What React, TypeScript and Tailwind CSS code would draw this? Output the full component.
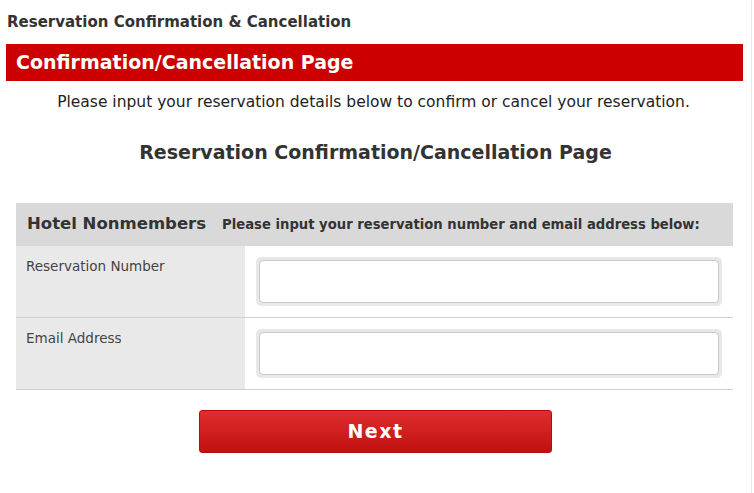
import React from "react";

export default function App() {
  return (
    <div
      className="w-[754px] h-[493px] bg-white relative overflow-hidden text-[#333]"
      style={{ fontFamily: '"DejaVu Sans", "Noto Sans", sans-serif' }}
    >
      <div className="absolute right-[2px] top-0 bottom-0 w-px bg-[#ececec]" />
      <div className="pl-[7px] pt-[11px] h-[44px] text-[15px] font-bold leading-[22px] text-[#333]">
        Reservation Confirmation &amp; Cancellation
      </div>
      <div className="ml-[6px] w-[737px] h-[37px] bg-[#cc0000] text-white text-[19px] font-bold leading-[36px] pl-[10px]">
        Confirmation/Cancellation Page
      </div>
      <p className="text-center text-[15.5px] leading-[20px] mt-[11px] text-[#222] pr-[7px]">
        Please input your reservation details below to confirm or cancel your reservation.
      </p>
      <h2 className="text-center text-[19px] font-bold leading-[28px] mt-[26px] text-[#333] pr-[3px]">
        Reservation Confirmation/Cancellation Page
      </h2>
      <div className="ml-[16px] w-[717px] mt-[37px]">
        <div className="h-[43px] bg-[#d9d9d9] flex items-center pl-[11px] gap-[16px] whitespace-nowrap">
          <span className="text-[16.5px] font-bold text-[#333]">Hotel Nonmembers</span>
          <span className="text-[13.2px] font-bold text-[#333]">
            Please input your reservation number and email address below:
          </span>
        </div>
        {["Reservation Number", "Email Address"].map((label) => (
          <div key={label} className="flex h-[72px] border-b border-[#cfcfcf]">
            <div className="w-[229px] bg-[#e9e9e9] text-[13.5px] text-[#444] pl-[10px] pt-[11px] leading-[18px]">
              {label}
            </div>
            <div className="flex-1 pl-[11px] pt-[11px]">
              <div className="w-[466px] h-[49px] rounded-[5px] bg-[#e8e8e8] p-[3px]">
                <input
                  type="text"
                  className="w-full h-full bg-white border border-[#c8c8c8] rounded-[4px] outline-none"
                />
              </div>
            </div>
          </div>
        ))}
      </div>
      <div className="flex justify-center mt-[20px] pr-[3px]">
        <button className="w-[353px] h-[43px] rounded-[3px] text-white font-bold text-[19px] tracking-[1.5px] bg-gradient-to-b from-[#e02c2c] to-[#c00f0f] border border-[#b50d0d]">
          Next
        </button>
      </div>
    </div>
  );
}
